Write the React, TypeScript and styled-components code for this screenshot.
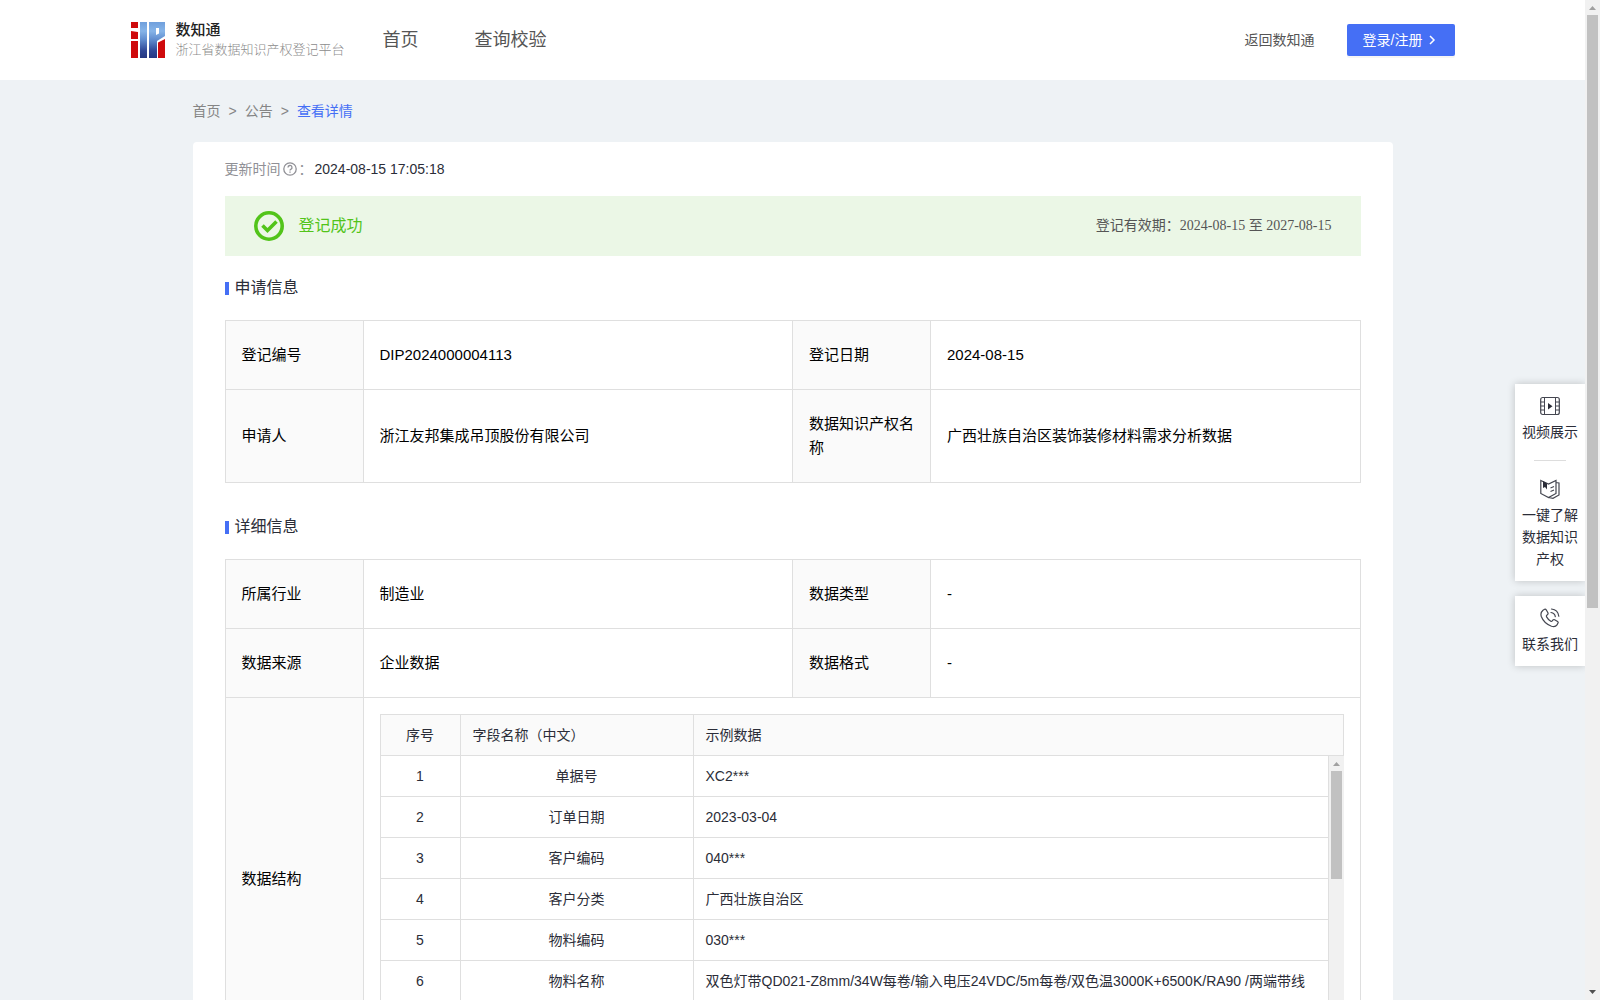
import React from "react";
import styled, { createGlobalStyle, css } from "styled-components";

const sans = `"Liberation Sans", "Noto Sans CJK SC", sans-serif`;
const serif = `"Liberation Serif", "Noto Sans CJK SC", serif`;
const blue = "#456ff5";
const ink = "#2b2d38";
const line = "#dfdfdf";

const GlobalStyle = createGlobalStyle`
  *, *::before, *::after { box-sizing: border-box; }
  body { margin: 0; font-family: ${sans}; font-size: 14px; line-height: 22px; color: ${ink}; }
  a { color: inherit; text-decoration: none; }
  button { font: inherit; cursor: pointer; }
  h1, h2, p { margin: 0; font-weight: 400; }
`;

const Shell = styled.div`
  display: flex;
  height: 100vh;
  overflow: hidden;
  position: relative;
`;

const Page = styled.div`
  flex: 1;
  min-width: 0;
  background: #eef2f5;
`;

const Header = styled.header`
  background: #fff;
`;

const HeaderInner = styled.div`
  display: flex;
  align-items: center;
  max-width: 1324px;
  height: 80px;
  margin: 0 auto;
`;

const Brand = styled.a`
  display: flex;
  align-items: center;
  gap: 11px;
`;

const BrandName = styled.span`
  display: block;
  font-size: 15px;
  line-height: 20px;
  font-weight: 500;
  color: #222;
`;

const BrandSub = styled.span`
  display: block;
  font-size: 13px;
  line-height: 20px;
  font-weight: 300;
  color: #8c8c8c;
`;

const Nav = styled.nav`
  display: flex;
  gap: 56px;
  margin-left: 38px;
  font-size: 18px;
  line-height: 28px;
  color: #555;
`;

const HeaderActions = styled.div`
  display: flex;
  align-items: center;
  gap: 32px;
  margin-left: auto;
  color: #555;
`;

const LoginButton = styled.button`
  display: flex;
  align-items: center;
  gap: 2px;
  height: 32px;
  padding: 0 16px;
  border: 0;
  border-radius: 2px;
  background: ${blue};
  color: #fff;
  box-shadow: 0 2px 0 rgba(0, 0, 0, 0.04);
`;

const Main = styled.main`
  max-width: 1200px;
  margin: 0 auto;
`;

const Breadcrumb = styled.nav`
  display: flex;
  gap: 8px;
  padding: 20px 0;
  color: #858585;
`;

const CurrentCrumb = styled.a`
  && { color: ${blue}; }
`;

const Card = styled.section`
  padding: 16px 32px;
  border-radius: 4px;
  background: #fff;
`;

const Updated = styled.p`
  display: flex;
  align-items: center;
  gap: 2px;
  color: #909096;
`;

const UpdatedTime = styled.time`
  color: ${ink};
`;

const Banner = styled.div`
  display: flex;
  align-items: center;
  gap: 15px;
  height: 60px;
  margin-top: 16px;
  padding: 0 29px;
  background: #ebf7e6;
`;

const BannerStatus = styled.strong`
  font-size: 16px;
  font-weight: 400;
  color: #52c41a;
`;

const BannerPeriod = styled.span`
  margin-left: auto;
  font-family: ${serif};
  color: #555;
`;

const SectionTitle = styled.h2<{ $gap: number }>`
  display: flex;
  align-items: center;
  gap: 6px;
  margin-top: ${(p) => p.$gap}px;
  margin-bottom: 20px;
  font-size: 16px;
  line-height: 24px;

  &::before {
    content: "";
    width: 4px;
    height: 13px;
    background: ${blue};
  }
`;

const InfoTable = styled.table`
  width: 100%;
  border-collapse: collapse;
  table-layout: fixed;
  font-size: 15px;
  line-height: 24px;
  color: #000;
`;

const cell = css`
  border: 1px solid ${line};
  font-weight: 400;
  text-align: left;
`;

const LabelCell = styled.th`
  ${cell}
  padding: 22px 16px;
  background: #fafafa;
`;

const ValueCell = styled.td`
  ${cell}
  padding: 22px 16px;
`;

const NestedCell = styled.td`
  ${cell}
  padding: 16px;
`;

const NestedFrame = styled.div`
  display: flex;
  height: 330px;
  position: relative;
`;

const FieldTable = styled.table`
  width: 100%;
  height: max-content;
  border-collapse: collapse;
  table-layout: fixed;
  font-size: 14px;
  line-height: 22px;
  color: ${ink};
`;

const FieldHead = styled.th<{ $center?: boolean }>`
  ${cell}
  height: 41px;
  padding: 0 12px;
  background: #fafafa;
  text-align: ${(p) => (p.$center ? "center" : "left")};
`;

const FieldCell = styled.td<{ $center?: boolean }>`
  ${cell}
  height: 41px;
  padding: 0 12px;
  white-space: nowrap;
  text-align: ${(p) => (p.$center ? "center" : "left")};
`;

const Track = styled.div`
  display: flex;
  flex-direction: column;
  align-items: center;
  width: 15px;
  background: #f1f1f1;
`;

const PageTrack = styled(Track)`
  flex: none;
`;

const TableTrack = styled(Track)`
  position: absolute;
  top: 42px;
  right: 0;
  bottom: 0;
  width: 16px;
  border-left: 1px solid ${line};
`;

const Thumb = styled.div<{ $share: number }>`
  width: 11px;
  height: ${(p) => p.$share}%;
  background: #c1c1c1;
`;

const Arrow = styled.svg`
  flex: none;
  display: block;
`;

const TrackEnd = styled.div`
  margin-top: auto;
`;

const SideTools = styled.aside`
  position: absolute;
  top: 384px;
  right: 15px;
  display: grid;
  gap: 15px;
  width: 70px;
  text-align: center;
`;

const ToolGroup = styled.div`
  padding: 12px 7px 11px;
  background: #fff;
  box-shadow: 0 0 8px rgba(0, 0, 0, 0.2);
  clip-path: inset(-12px 0 -12px -12px);
`;

const Tool = styled.a`
  display: flex;
  flex-direction: column;
  align-items: center;
  gap: 5px;
`;

const ToolDivider = styled.hr`
  width: 32px;
  margin: 17px auto 18px;
  border: 0;
  border-top: 1px solid #ddd;
`;

const Logo = () => (
  <svg width="34" height="36" viewBox="0 0 34 36" aria-hidden="true">
    <defs>
      <linearGradient id="logoBlue" x1="0" y1="0" x2="0" y2="1">
        <stop offset="0" stopColor="#6f9fdc" />
        <stop offset="0.25" stopColor="#86b4e8" />
        <stop offset="0.5" stopColor="#5f8bcd" />
        <stop offset="0.8" stopColor="#2f4796" />
        <stop offset="1" stopColor="#253782" />
      </linearGradient>
    </defs>
    <path fill="#cf0a0c" d="M0 0h7v6H0zM0 9l7 1v7H0zM0 19h7v17H0zM27 20.500l7-3.500v19h-7z" />
    <path
      fill="url(#logoBlue)"
      fillRule="evenodd"
      d="M9 0h7v36H9zM18 0h16v14l-8 5v17h-8zM25 6v7l3-1.500V6z"
    />
  </svg>
);

const ArrowUp = () => (
  <Arrow width="15" height="15" viewBox="0 0 15 15" aria-hidden="true">
    <path d="M4 10h7L7.500 6z" fill="#a0a0a0" />
  </Arrow>
);

const ArrowDown = () => (
  <Arrow width="15" height="15" viewBox="0 0 15 15" aria-hidden="true">
    <path d="M4 5h7L7.500 9z" fill="#505050" />
  </Arrow>
);

const fields = [
  ["单据号", "XC2***"],
  ["订单日期", "2023-03-04"],
  ["客户编码", "040***"],
  ["客户分类", "广西壮族自治区"],
  ["物料编码", "030***"],
  ["物料名称", "双色灯带QD021-Z8mm/34W每卷/输入电压24VDC/5m每卷/双色温3000K+6500K/RA90 /两端带线"],
];

const SideCol = styled.col`
  width: 138px;
`;

const IndexCol = styled.col`
  width: 80px;
`;

const NameCol = styled.col`
  width: 233px;
`;

const InfoRow = ({ cells }: { cells: string[] }) => (
  <tr>
    <LabelCell scope="row">{cells[0]}</LabelCell>
    <ValueCell>{cells[1]}</ValueCell>
    <LabelCell scope="row">{cells[2]}</LabelCell>
    <ValueCell>{cells[3]}</ValueCell>
  </tr>
);

const Columns = () => (
  <colgroup>
    <SideCol />
    <col />
    <SideCol />
    <col />
  </colgroup>
);

export default function App() {
  return (
    <Shell>
      <GlobalStyle />
      <Page>
        <Header>
          <HeaderInner>
            <Brand href="#">
              <Logo />
              <span>
                <BrandName>数知通</BrandName>
                <BrandSub>浙江省数据知识产权登记平台</BrandSub>
              </span>
            </Brand>
            <Nav>
              <a href="#">首页</a>
              <a href="#">查询校验</a>
            </Nav>
            <HeaderActions>
              <a href="#">返回数知通</a>
              <LoginButton type="button">
                登录/注册
                <svg width="14" height="14" viewBox="0 0 14 14" fill="none" stroke="#fff" strokeWidth="1.500" aria-hidden="true">
                  <path d="M5 3l4 4-4 4" />
                </svg>
              </LoginButton>
            </HeaderActions>
          </HeaderInner>
        </Header>
        <Main>
          <Breadcrumb>
            <a href="#">首页</a>
            <span>&gt;</span>
            <a href="#">公告</a>
            <span>&gt;</span>
            <CurrentCrumb href="#">查看详情</CurrentCrumb>
          </Breadcrumb>
          <Card>
            <Updated>
              更新时间
              <svg width="14" height="14" viewBox="0 0 14 14" fill="none" stroke="#909096" strokeWidth="1.300" aria-hidden="true">
                <circle cx="7" cy="7" r="6.200" />
                <path d="M5 5.500a2 2 0 1 1 2.800 1.800q-.8.400-.8 1.100M7 9.500v1.200" />
              </svg>
              ：
              <UpdatedTime>2024-08-15 17:05:18</UpdatedTime>
            </Updated>
            <Banner>
              <svg width="30" height="30" viewBox="0 0 30 30" fill="none" stroke="#52c41a" aria-hidden="true">
                <circle cx="15" cy="15" r="13.200" strokeWidth="3.600" />
                <path d="M8.500 14.500l5 5 9-9" strokeWidth="3.600" />
              </svg>
              <BannerStatus>登记成功</BannerStatus>
              <BannerPeriod>登记有效期：2024-08-15 至 2027-08-15</BannerPeriod>
            </Banner>
            <SectionTitle $gap={20}>申请信息</SectionTitle>
            <InfoTable>
              <Columns />
              <tbody>
                <InfoRow cells={["登记编号", "DIP2024000004113", "登记日期", "2024-08-15"]} />
                <InfoRow cells={["申请人", "浙江友邦集成吊顶股份有限公司", "数据知识产权名称", "广西壮族自治区装饰装修材料需求分析数据"]} />
              </tbody>
            </InfoTable>
            <SectionTitle $gap={32}>详细信息</SectionTitle>
            <InfoTable>
              <Columns />
              <tbody>
                <InfoRow cells={["所属行业", "制造业", "数据类型", "-"]} />
                <InfoRow cells={["数据来源", "企业数据", "数据格式", "-"]} />
                <tr>
                  <LabelCell scope="row">数据结构</LabelCell>
                  <NestedCell colSpan={3}>
                    <NestedFrame>
                      <FieldTable>
                        <colgroup>
                          <IndexCol />
                          <NameCol />
                          <col />
                        </colgroup>
                        <thead>
                          <tr>
                            <FieldHead $center>序号</FieldHead>
                            <FieldHead>字段名称（中文）</FieldHead>
                            <FieldHead>示例数据</FieldHead>
                          </tr>
                        </thead>
                        <tbody>
                          {fields.map(([name, sample], i) => (
                            <tr key={name}>
                              <FieldCell $center>{i + 1}</FieldCell>
                              <FieldCell $center>{name}</FieldCell>
                              <FieldCell>{sample}</FieldCell>
                            </tr>
                          ))}
                        </tbody>
                      </FieldTable>
                      <TableTrack>
                        <ArrowUp />
                        <Thumb $share={37.5} />
                      </TableTrack>
                    </NestedFrame>
                  </NestedCell>
                </tr>
              </tbody>
            </InfoTable>
          </Card>
        </Main>
      </Page>
      <SideTools>
        <ToolGroup>
          <Tool href="#">
            <svg width="20" height="20" viewBox="0 0 20 20" fill="none" stroke="#444650" aria-hidden="true">
              <rect x="0.700" y="1.500" width="18.600" height="17" rx="2" strokeWidth="1.200" />
              <path d="M4.500 1.500v17M15.500 1.500v17M.7 6h3.800M.7 10h3.800M.7 14h3.800M15.500 6h3.800M15.500 10h3.800M15.500 14h3.800" />
              <path d="M8 7v6.500l4.500-3.200z" fill="#2b2d38" stroke="none" />
            </svg>
            视频展示
          </Tool>
          <ToolDivider />
          <Tool href="#">
            <svg width="20" height="20" viewBox="0 0 20 20" fill="none" stroke="#444650" strokeWidth="1.200" aria-hidden="true">
              <path d="M.8 1.500L8.500 5 16 1.500v13l-7.500 4-7.700-4zM16 3.500l3 .5v12l-6 3.300-4.500-.8M10.500 9l3.500-1.500M10.500 12.500l3.500-1.500" />
              <path d="M3 2v7l2-1 2 2.500V4.500z" fill="#2b2d38" stroke="none" />
            </svg>
            一键了解数据知识产权
          </Tool>
        </ToolGroup>
        <ToolGroup>
          <Tool href="#">
            <svg width="20" height="20" viewBox="0 0 20 20" fill="none" stroke="#444650" strokeWidth="1.200" strokeLinecap="round" aria-hidden="true">
              <path d="M3 2.200l1.600-.9q1-.4 1.600.5l1.700 3q.5 1-.3 1.700l-.9.800q-.6.700-.1 1.600 1.600 2.900 4.200 4.300.8.400 1.500-.3l.7-.9q.7-.8 1.600-.3l3 1.800q.9.600.4 1.500l-1 1.900q-1.700 2.500-5.500 1.300Q4 15.500 1.300 8.500.100 4.500 3 2.200z" />
              <path d="M11 4.500q3.800.5 4.300 4.200M11.500 1q6.500.8 7.300 7.200" />
            </svg>
            联系我们
          </Tool>
        </ToolGroup>
      </SideTools>
      <PageTrack>
        <ArrowUp />
        <Thumb $share={59.3} />
        <TrackEnd>
          <ArrowDown />
        </TrackEnd>
      </PageTrack>
    </Shell>
  );
}
